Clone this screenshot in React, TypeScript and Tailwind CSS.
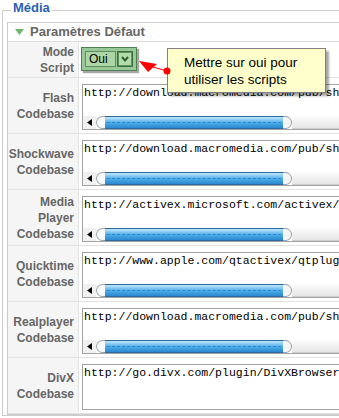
import React from 'react';

const rows: { label: string[]; url: string; scroll: boolean }[] = [
  { label: ['Flash', 'Codebase'], url: 'http://download.macromedia.com/pub/shockwave/cabs/flash/swflash.cab', scroll: true },
  { label: ['Shockwave', 'Codebase'], url: 'http://download.macromedia.com/pub/shockwave/cabs/director/sw.cab', scroll: true },
  { label: ['Media', 'Player', 'Codebase'], url: 'http://activex.microsoft.com/activex/controls/mplayer/en/nsmp2inf.cab', scroll: true },
  { label: ['Quicktime', 'Codebase'], url: 'http://www.apple.com/qtactivex/qtplugin.cab#version=6,0,2,0', scroll: true },
  { label: ['Realplayer', 'Codebase'], url: 'http://download.macromedia.com/pub/shockwave/cabs/flash/swflash.cab', scroll: true },
  { label: ['DivX', 'Codebase'], url: 'http://go.divx.com/plugin/DivXBrowserPlugin.cab', scroll: false },
];

const Label: React.FC<{ lines: string[] }> = ({ lines }) => (
  <div className="w-[71px] shrink-0 bg-[#f5f5f5] border-r border-[#e4e4e4] flex flex-col justify-center items-end pr-[4px] text-[12px] leading-[16px] font-bold text-[#666]">
    {lines.map((l) => (
      <span key={l}>{l}</span>
    ))}
  </div>
);

const ScrollBar: React.FC = () => (
  <div className="flex h-[13px]">
    <div className="w-[13px] bg-[#f1f1f1] flex items-center justify-center">
      <svg width="5" height="7" viewBox="0 0 5 7">
        <polygon points="0,3.5 5,0 5,7" fill="#000" />
      </svg>
    </div>
    <div className="flex w-[196px]">
      <div className="w-[9px] rounded-l-full bg-[#fafafa] border border-r-0 border-[#9aa3ab]" />
      <div className="flex-1 flex flex-col border-y border-[#2d6a9f] bg-linear-to-b from-[#bfe6f9] via-[#4eb0ea] to-[#2a87cc]">
        <div className="mt-[5px] mx-[2px] border-t border-dashed border-[#2f86c8]" />
      </div>
      <div className="w-[9px] rounded-r-full bg-[#f4f4f4] border border-l-0 border-[#9aa3ab]" />
    </div>
    <div className="flex-1 bg-linear-to-b from-[#fcfcfc] to-[#e6e6e6] border-b border-[#cfcfcf]" />
  </div>
);

const FakeTextarea: React.FC<{ url: string; scroll: boolean }> = ({ url, scroll }) => (
  <div className="w-[320px] h-[46px] border border-[#a3a3a3] bg-white flex flex-col overflow-hidden">
    <div className="pl-[1px] pt-[1px] font-['Liberation_Mono','Courier_New',monospace] text-[11.5px] leading-[13px] text-black whitespace-nowrap">
      {url}
    </div>
    <div className="flex-1" />
    {scroll && <ScrollBar />}
  </div>
);

const App: React.FC = () => {
  return (
    <div className="relative w-[339px] h-[418px] overflow-hidden bg-white font-['Liberation_Sans',Arial,sans-serif]">
      <fieldset className="ml-[2px] w-[420px] border border-[#cccccc] pl-[4px] pt-[1px]">
        <legend className="ml-[4px] px-[2px] pb-[5px] text-[13px] leading-[16px] font-bold text-[#2b5fb4]">
          Média
        </legend>
        <div className="border border-[#cccccc] bg-white">
          <div className="h-[19px] flex items-center pl-[7px] gap-[6px] border-b border-[#dddddd]">
            <svg width="9" height="6" viewBox="0 0 9 6">
              <polygon points="0,0 9,0 4.5,6" fill="#6cb86a" />
            </svg>
            <span className="text-[13px] font-bold text-[#666]">Paramètres Défaut</span>
          </div>

          <div className="flex h-[36px] border-b border-[#e2e2e2]">
            <Label lines={['Mode', 'Script']} />
            <div className="pl-[2px] pt-[5px]">
              <div className="flex w-[56px] h-[24px] p-[3px] gap-[1px] bg-[#98c898] border border-[#4f804f] shadow-[2px_2px_1px_rgba(0,0,0,0.35)]">
                <div className="flex-1 bg-[#acd7a4] border border-[#5f8f5f] pl-[3px] text-[12px] leading-[15px] text-black">
                  Oui
                </div>
                <div className="w-[16px] bg-[#5d915d] border border-[#3f6f3f] flex items-center justify-center">
                  <div className="w-[12px] h-[12px] bg-[#b4dbac] flex items-center justify-center">
                    <svg width="8" height="6" viewBox="0 0 8 6">
                      <polyline points="1,1 4,4.5 7,1" fill="none" stroke="#2e5e2e" strokeWidth="2" />
                    </svg>
                  </div>
                </div>
              </div>
            </div>
          </div>

          {rows.map((r) => (
            <div key={r.label.join(' ')} className="flex h-[56px] border-b border-[#e2e2e2]">
              <Label lines={r.label} />
              <div className="pl-[3px] pt-[6px]">
                <FakeTextarea url={r.url} scroll={r.scroll} />
              </div>
            </div>
          ))}
        </div>
      </fieldset>

      <div className="absolute left-[167px] top-[48px] w-[159px] h-[45px] bg-[#ffffcc] border border-[#808080] shadow-[3px_3px_2px_rgba(0,0,0,0.35)] pl-[16px] pt-[5px] text-[13.5px] leading-[17px] text-black">
        Mettre sur oui pour
        <br />
        utiliser les scripts
      </div>
      <svg className="absolute left-[136px] top-[58px]" width="36" height="20" viewBox="0 0 36 20">
        <polygon points="3,3 21,6 12,14" fill="#ff0000" />
        <line x1="17" y1="9" x2="31" y2="13" stroke="#ff0000" strokeWidth="1" />
        <circle cx="31" cy="13" r="3.5" fill="#ff0000" />
      </svg>
    </div>
  );
};

export default App;
